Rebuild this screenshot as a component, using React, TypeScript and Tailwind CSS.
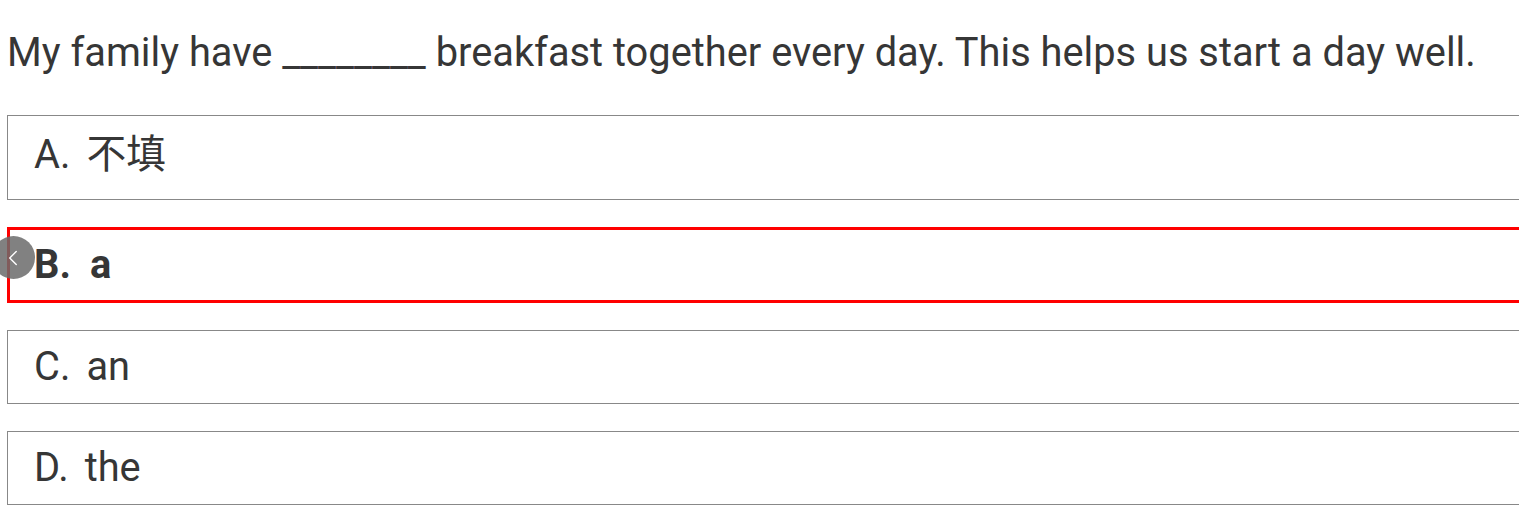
import { ChevronLeft } from "lucide-react";

const options = [
  { key: "A", text: "不填", selected: false },
  { key: "B", text: "a", selected: true },
  { key: "C", text: "an", selected: false },
  { key: "D", text: "the", selected: false },
];

export default function App() {
  return (
    <div
      className="relative min-h-[515px] bg-white overflow-hidden text-[#363636]"
      style={{ fontFamily: "Roboto, 'Noto Sans CJK SC', sans-serif" }}
    >
      <p className="pl-[7px] pt-[26px] text-[39.8px] leading-[54px] whitespace-nowrap">
        My family have ________ breakfast together every day. This helps us start a day well.
      </p>
      <div className="mt-[35px] ml-[7px] flex flex-col gap-[27px]">
        {options.map((o) => (
          <div
            key={o.key}
            className={
              o.selected
                ? "border-[3px] border-r-0 border-[#ff0000] pl-[24px] h-[76px] flex items-center text-[39.8px] font-bold"
                : o.key === "A"
                ? "border border-r-0 border-[#888888] pl-[26px] pt-[13px] h-[85px] text-[39.8px] leading-[52px]"
                : "border border-r-0 border-[#888888] pl-[26px] h-[74px] flex items-center text-[39.8px]"
            }
          >
            <span className={o.selected ? "mr-[19px]" : "mr-[16px]"}>{o.key}.</span>
            <span>{o.text}</span>
          </div>
        ))}
      </div>
      <div className="absolute left-[-8px] top-[236px] w-[43px] h-[43px] rounded-full bg-[#6b6b6b]/85 flex items-center justify-center pr-[2px]">
        <ChevronLeft className="w-[26px] h-[26px] text-white" strokeWidth={1.3} />
      </div>
    </div>
  );
}
